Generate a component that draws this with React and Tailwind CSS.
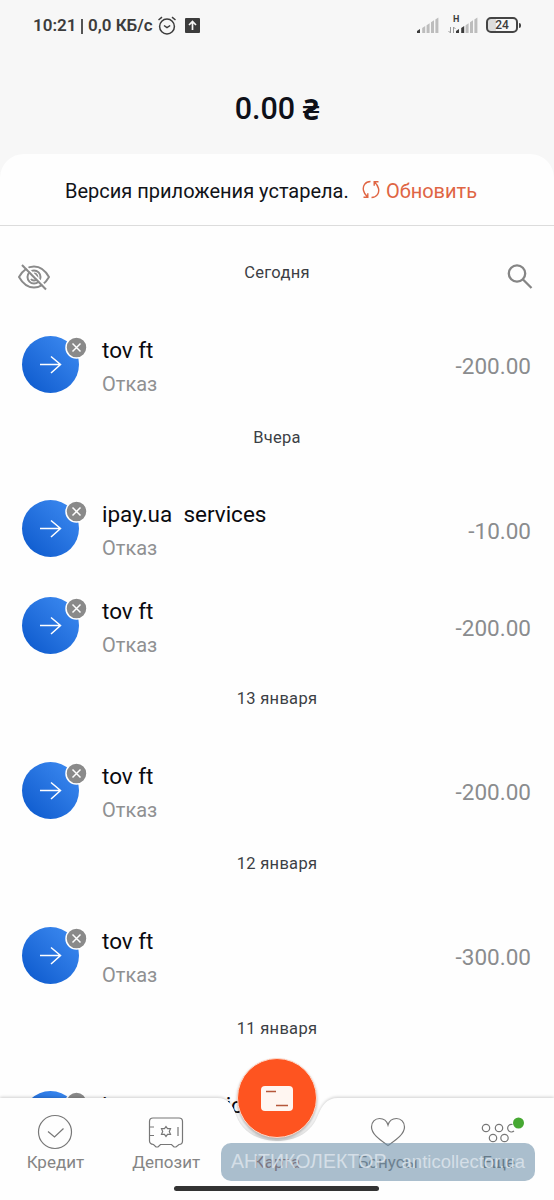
const groups = [
  { date: 'Сегодня', items: [{ title: 'tov ft', amount: '-200.00' }] },
  {
    date: 'Вчера',
    items: [
      { title: 'ipay.ua  services', amount: '-10.00' },
      { title: 'tov ft', amount: '-200.00' },
    ],
  },
  { date: '13 января', items: [{ title: 'tov ft', amount: '-200.00' }] },
  { date: '12 января', items: [{ title: 'tov ft', amount: '-300.00' }] },
  { date: '11 января', items: [{ title: 'ipay.ua  services', amount: '-10.00' }] },
]

function StatusBar() {
  return (
    <div className="flex h-[52px] shrink-0 items-center pl-[33px] pr-[33px] text-[#3c3c3c]">
      <span className="whitespace-pre text-[17px] font-semibold">10:21</span>
      <span className="mx-[5px] h-[15px] w-[1.5px] bg-[#555]" />
      <span className="whitespace-pre text-[17px] font-semibold">0,0 КБ/с</span>
      <svg className="ml-1 h-[20px] w-[20px]" viewBox="0 0 20 20" fill="none" stroke="currentColor" strokeWidth="1.5">
        <circle cx="10" cy="10.500" r="7.4" />
        <path d="M1.500 4 5 1.200M15 1.200l3.500 2.800M7 9.500l3 2.200 3.200-2.200" />
      </svg>
      <svg className="-mt-px ml-[8px] h-[15px] w-[15px]" viewBox="0 0 15 15">
        <rect width="15" height="15" rx="1" fill="#3c3c3c" />
        <path d="M7.500 12V4M4 7l3.500-3.500L11 7" fill="none" stroke="#f7f7f7" strokeWidth="1.7" />
      </svg>
      <div className="flex-1" />
      <Signal strong={1} />
      <div className="relative ml-[9px] mt-[-1px] flex items-center">
        <span className="absolute left-[5px] top-[-2px] text-[9px] font-bold leading-none">H</span>
        <svg className="h-[17px] w-[8px] text-[#999]" viewBox="0 0 8 17" fill="none" stroke="currentColor" strokeWidth="1">
          <path d="M2.500 10v6L.5 14M5.500 16v-6l2 2" />
        </svg>
        <Signal strong={2} />
      </div>
      <div className="-mt-[2px] ml-[8px] flex h-[16px] w-[32px] items-center justify-center rounded-[5px] border-2 border-[#444] bg-linear-to-r from-[#ddd] from-30% to-[#f7f7f7] to-30% text-[12px] font-medium leading-none">
        24
      </div>
      <span className="-mt-[2px] ml-px h-[5px] w-[2px] rounded-r bg-[#444]" />
    </div>
  )
}

function Signal({ strong }) {
  return (
    <svg className="-mt-px h-[17px] w-[22px]" viewBox="0 0 22 17">
      {[0, 1, 2, 3, 4].map(i => (
        <path
          key={i}
          d={`M${i * 4.400 + (i ? 0.8 : 0)} 16v${-2 - i * 2.900}l3-2V16z`}
          fill={i < strong ? '#3c3c3c' : '#bdbdbd'}
        />
      ))}
    </svg>
  )
}

function Transaction({ item }) {
  return (
    <div className="flex h-[97px] shrink-0 items-center pl-[22px] pr-[23px]">
      <div className="relative h-[57px] w-[57px] shrink-0 rounded-full bg-linear-to-tr from-[#0757cb] to-[#3f8df3]">
        <svg className="h-full w-full" viewBox="0 0 57 57" fill="none" stroke="#fff" strokeWidth="1.5">
          <path d="M18 28.500h20.500M29 20.500l9.500 8L29 37" />
        </svg>
        <svg className="absolute left-[43px] top-0 h-[23px] w-[23px]" viewBox="0 0 23 23">
          <circle cx="11.500" cy="11.500" r="10.500" fill="#8a8a8a" stroke="#fff" strokeWidth="1.500" />
          <path d="m7.500 7.500 8 8M15.500 7.500l-8 8" stroke="#fff" strokeWidth="1.500" />
        </svg>
      </div>
      <div className="ml-[23px] flex-1">
        <div className="mt-[5px] h-[34px] whitespace-pre text-[22.500px] leading-[34px] text-[#0a0a0f]">
          {item.title}
        </div>
        <div className="text-[20px] leading-[34px] text-[#8f9092]">Отказ</div>
      </div>
      <span className="mt-[5px] text-[22.500px] text-[#8a8c8e]">{item.amount}</span>
    </div>
  )
}

function NavItem({ label, children }) {
  return (
    <div className="flex flex-1 flex-col items-center">
      <div className="flex h-[36px] items-center">{children}</div>
      <span className="mt-px text-[17px] leading-[22px] text-[#858585]">{label}</span>
    </div>
  )
}

function BottomNav() {
  return (
    <nav className="absolute bottom-0 left-0 h-[102px] w-full">
      <svg className="absolute left-0 top-0 h-full w-full overflow-visible drop-shadow-[0_-1px_1.5px_rgba(0,0,0,0.18)]" viewBox="0 0 554 102">
        <path d="M0 0H217C229 0 233 8 236 17C242 34 258 43 277 43S312 34 318 17C322 8 326 0 338 0H554V102H0Z" fill="#fefefe" />
      </svg>
      <div className="relative flex pt-4">
        <NavItem label="Кредит">
          <svg className="h-[36px] w-[36px]" viewBox="0 0 36 36" fill="none" stroke="#777" strokeWidth="1.200">
            <circle cx="18" cy="18" r="16.500" />
            <path d="m11 17.500 6.500 5.500 9-8.500" />
          </svg>
        </NavItem>
        <NavItem label="Депозит">
          <svg className="h-[36px] w-[36px]" viewBox="0 0 36 36" fill="none" stroke="#777" strokeWidth="1.200">
            <path d="M5 4h26q3.500 0 3.500 3.500V27q0 3.500-3.500 3.500l-3 2.500h-2l-2.500-2.500h-11L10 33H8l-2.500-2.500Q1.500 30 1.500 27V7.500Q1.500 4 5 4ZM1.500 13H6M1.500 21.500H6M30 13v9" />
            <path d="m18 12.500 1.500 2.200h3l-1.200 2.800 1.200 2.800h-3L18 22.500l-1.500-2.200h-3l1.200-2.800-1.200-2.800h3Z" />
          </svg>
        </NavItem>
        <NavItem label={<span className="text-[#8d4b43]">Карта</span>}>{null}</NavItem>
        <NavItem label={<span className="text-[#666]">Бонусы</span>}>
          <svg className="h-[36px] w-[36px]" viewBox="0 0 36 36" fill="none" stroke="#777" strokeWidth="1.200">
            <path d="M18 31.500C11 26.500 1.500 20.500 1.500 13 1.500 8 5 4.500 9.500 4.500S17 7.500 18 11c1-3.500 4-6.500 8.500-6.500S34.500 8 34.500 13c0 7.500-9.500 13.500-16.500 18.500Z" />
          </svg>
        </NavItem>
        <NavItem label={<span className="text-[#555]">Еще</span>}>
          <svg className="h-[36px] w-[48px] overflow-visible" viewBox="0 0 48 36" fill="none" stroke="#777" strokeWidth="1.200">
            <circle cx="11" cy="14" r="3.700" />
            <circle cx="24" cy="14" r="3.700" />
            <path d="M37.500 10.500a3.800 3.800 0 1 0 1.500 6.500" />
            <circle cx="18" cy="24" r="3.700" />
            <circle cx="29.500" cy="24" r="3.700" />
            <circle cx="43.500" cy="9" r="5.500" fill="#46a832" stroke="none" />
          </svg>
        </NavItem>
      </div>
      <div className="absolute left-[237px] top-[-40px] flex h-[80px] w-[80px] items-center justify-center rounded-full border border-[#ffd9c9] bg-[#fe5420] shadow-[0_2px_3px_rgba(0,0,0,0.3)]">
        <svg className="h-[25px] w-[32px]" viewBox="0 0 32 25">
          <rect width="32" height="25" rx="4" fill="#fff6f1" />
          <path d="M5 5.500h10M15 19.500h12" stroke="#b5573b" strokeWidth="1.300" />
        </svg>
      </div>
      <div className="absolute left-[221px] top-[45px] flex h-[38px] w-[314px] items-center justify-between whitespace-nowrap rounded-[10px] bg-[#7292ab]/60 px-[10px] font-['Liberation_Sans',sans-serif] text-[#dde5ec]/85">
        <span className="text-[19.500px]">АНТИКОЛЕКТОР</span>
        <span className="text-[18.500px]">anticollector.ua</span>
      </div>
      <div className="absolute bottom-[9px] left-[174px] h-[5px] w-[205px] rounded-full bg-[#333]" />
    </nav>
  )
}

export default function App() {
  return (
    <div className="relative flex h-[1200px] w-[554px] flex-col overflow-hidden bg-[#f7f7f7] font-[Roboto,sans-serif]">
      <StatusBar />
      <header className="flex h-[102px] shrink-0 items-center justify-center whitespace-pre pt-[12px] text-[30.500px] font-medium text-[#0e1019]">
        0.00 <span className="font-['Noto_Sans',sans-serif] text-[29px] font-bold">₴</span>
      </header>
      <main className="flex flex-1 flex-col rounded-t-[24px] bg-[#fefefe]">
        <div className="flex h-[72px] shrink-0 items-center pl-[65px] pt-[3px] border-b border-[#dcdcdc] text-[20px]">
          <span className="w-[285px] whitespace-nowrap text-[#111318]">Версия приложения устарела.</span>
          <svg className="-mt-[3px] ml-[12px] mr-[6px] h-[19px] w-[18px]" viewBox="0 0 18 19" fill="none" stroke="#e06543" strokeWidth="1.400">
            <path d="M8.500 1.500C3 1.500.5 6 1.500 10.500 2 13 3.300 15 5.500 17M1.500 17.200h4.300v-4M9.500 17.500c5.500 0 8-4.500 7-9-.5-2.500-1.800-4.500-4-6.500M16.500 1.800h-4.300v4" />
          </svg>
          <span className="text-[#df6544]">Обновить</span>
        </div>
        <div className="relative mt-[22px] flex flex-col">
          <div className="absolute left-[18px] right-[21px] top-[13px] flex items-center justify-between">
            <svg className="h-[32px] w-[32px]" viewBox="0 0 32 32" fill="none" stroke="#8a8a8a" strokeWidth="2">
              <path d="M1 16C5 9 10 5.500 16 5.500S27 9 31 16c-4 7-9 10.500-15 10.500S5 23 1 16Z" />
              <circle cx="16" cy="16" r="6.500" />
              <path d="M16 12.500a3.500 3.500 0 1 1-3 5.500" />
              <path d="m5.500 3 24 24.500" stroke="#fefefe" strokeWidth="2" />
              <path d="m4 4 24 24.500" />
            </svg>
            <svg className="h-[28px] w-[26px]" viewBox="0 0 26 28" fill="none" stroke="#858585" strokeWidth="2.300">
              <circle cx="10" cy="10.500" r="8.200" />
              <path d="m15.500 16 9 9" />
            </svg>
          </div>
          {groups.map(group => (
            <section key={group.date} className="flex flex-col">
              <h2 className="h-[67.700px] pt-[13px] text-center text-[16.500px] leading-[24px] tracking-[0.3px] text-[#3c3f45]">
                {group.date}
              </h2>
              {group.items.map(item => (
                <Transaction key={item.title} item={item} />
              ))}
            </section>
          ))}
        </div>
      </main>
      <BottomNav />
    </div>
  )
}
